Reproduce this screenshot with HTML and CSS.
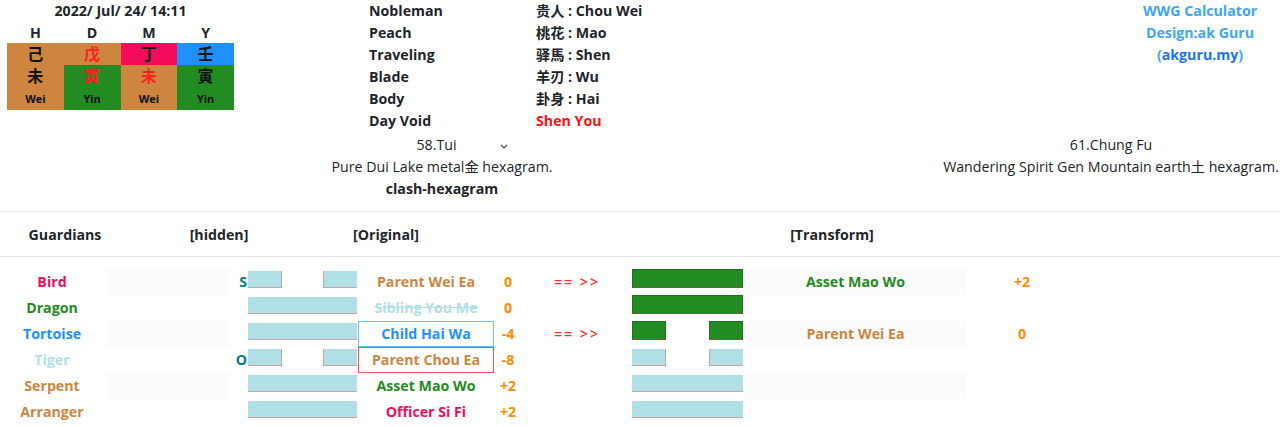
FILE: index.html
```html
<!DOCTYPE html>
<html lang="en">
<head>
<meta charset="utf-8">
<title>WWG Calculator</title>
<link rel="stylesheet" href="styles.css">
</head>
<body>
<div class="top">
  <div class="pillars">
    <div class="date">2022/ Jul/ 24/ 14:11</div>
    <div class="pgrid">
      <div class="ph">H</div><div class="ph">D</div><div class="ph">M</div><div class="ph">Y</div>
      <div class="stem peru">己</div>
      <div class="stem peru red">戊</div>
      <div class="stem pink">丁</div>
      <div class="stem blue">壬</div>
      <div class="branch peru"><span class="bc">未</span><span class="bn">Wei</span></div>
      <div class="branch green"><span class="bc red">寅</span><span class="bn">Yin</span></div>
      <div class="branch peru"><span class="bc red">未</span><span class="bn">Wei</span></div>
      <div class="branch green"><span class="bc">寅</span><span class="bn">Yin</span></div>
    </div>
  </div>
  <div class="info">
    <div>Nobleman</div><div>贵人 : Chou Wei</div>
    <div>Peach</div><div>桃花 : Mao</div>
    <div>Traveling</div><div>驿馬 : Shen</div>
    <div>Blade</div><div>羊刃 : Wu</div>
    <div>Body</div><div>卦身 : Hai</div>
    <div>Day Void</div><div class="void">Shen You</div>
  </div>
  <div class="brand">
    <div>WWG Calculator</div>
    <div>Design:ak Guru</div>
    <div>(<a href="#">akguru.my</a>)</div>
  </div>
</div>

<div class="hexnames">
  <div class="hx hx-left">
    <div class="select"><span>58.Tui</span><svg class="chev" width="8" height="5" viewBox="0 0 8 5"><polyline points="1,1 4,4 7,1" fill="none" stroke="#444" stroke-width="1.1"/></svg></div>
    <div>Pure Dui Lake metal金 hexagram.</div>
    <div class="bold">clash-hexagram</div>
  </div>
  <div class="hx hx-right">
    <div>61.Chung Fu</div>
    <div>Wandering Spirit Gen Mountain earth土 hexagram.</div>
  </div>
</div>

<div class="table">
  <div class="thead">
    <div>Guardians</div>
    <div>[hidden]</div>
    <div>[Original]</div>
    <div>[Transform]</div>
  </div>
  <div class="tbody">
    <div class="row odd">
      <div class="c-guard c-pink">Bird</div>
      <div class="c-hidden"></div>
      <div class="c-lbl">S</div>
      <div class="c-line"><div class="yin"><i></i><i></i></div></div>
      <div class="c-name c-peru">Parent Wei Ea</div>
      <div class="c-val">0</div>
      <div class="c-arrow">== &gt;&gt;</div>
      <div class="c-tline"><div class="yang g"></div></div>
      <div class="c-tname c-green">Asset Mao Wo</div>
      <div class="c-tval">+2</div>
    </div>
    <div class="row">
      <div class="c-guard c-green">Dragon</div>
      <div class="c-hidden"></div>
      <div class="c-lbl"></div>
      <div class="c-line"><div class="yang"></div></div>
      <div class="c-name c-powder strike">Sibling You Me</div>
      <div class="c-val">0</div>
      <div class="c-arrow"></div>
      <div class="c-tline"><div class="yang g"></div></div>
      <div class="c-tname"></div>
      <div class="c-tval"></div>
    </div>
    <div class="row odd">
      <div class="c-guard c-blue">Tortoise</div>
      <div class="c-hidden"></div>
      <div class="c-lbl"></div>
      <div class="c-line"><div class="yang"></div></div>
      <div class="c-name c-blue box-blue">Child Hai Wa</div>
      <div class="c-val">-4</div>
      <div class="c-arrow">== &gt;&gt;</div>
      <div class="c-tline"><div class="yin g"><i></i><i></i></div></div>
      <div class="c-tname c-peru">Parent Wei Ea</div>
      <div class="c-tval">0</div>
    </div>
    <div class="row">
      <div class="c-guard c-powder">Tiger</div>
      <div class="c-hidden"></div>
      <div class="c-lbl">O</div>
      <div class="c-line"><div class="yin"><i></i><i></i></div></div>
      <div class="c-name c-peru box-red">Parent Chou Ea</div>
      <div class="c-val">-8</div>
      <div class="c-arrow"></div>
      <div class="c-tline"><div class="yin"><i></i><i></i></div></div>
      <div class="c-tname"></div>
      <div class="c-tval"></div>
    </div>
    <div class="row odd">
      <div class="c-guard c-peru">Serpent</div>
      <div class="c-hidden"></div>
      <div class="c-lbl"></div>
      <div class="c-line"><div class="yang"></div></div>
      <div class="c-name c-green">Asset Mao Wo</div>
      <div class="c-val">+2</div>
      <div class="c-arrow"></div>
      <div class="c-tline"><div class="yang"></div></div>
      <div class="c-tname"></div>
      <div class="c-tval"></div>
    </div>
    <div class="row">
      <div class="c-guard c-peru">Arranger</div>
      <div class="c-hidden"></div>
      <div class="c-lbl"></div>
      <div class="c-line"><div class="yang"></div></div>
      <div class="c-name c-pink">Officer Si Fi</div>
      <div class="c-val">+2</div>
      <div class="c-arrow"></div>
      <div class="c-tline"><div class="yang"></div></div>
      <div class="c-tname"></div>
      <div class="c-tval"></div>
    </div>
  </div>
</div>
</body>
</html>
```

FILE: styles.css
```css
* { box-sizing: border-box; }
body {
  margin: 0;
  font-family: "Open Sans", "Noto Sans CJK SC", sans-serif;
  font-size: 14.2px;
  line-height: 22px;
  color: #212529;
  background: #fff;
  overflow: hidden;
}
.bold { font-weight: 700; }

/* top area */
.top {
  display: grid;
  grid-template-columns: 369px 1fr 160px;
  height: 132px;
}
.pillars { padding-left: 7px; }
.date {
  width: 227px;
  text-align: center;
  font-weight: 700;
}
.pgrid {
  display: grid;
  grid-template-columns: repeat(4, 1fr);
  width: 227px;
}
.ph {
  text-align: center;
  font-weight: 700;
  height: 21px;
  line-height: 21px;
}
.stem {
  height: 22px;
  line-height: 22px;
  text-align: center;
  font-weight: 700;
  font-size: 16px;
  color: #111;
}
.branch {
  height: 45px;
  display: flex;
  flex-direction: column;
  align-items: center;
  color: #111;
}
.bc { font-size: 16px; font-weight: 700; line-height: 23px; }
.bn { font-size: 11px; font-weight: 700; line-height: 22px; }
.peru { background: #cd853f; }
.green { background: #228b22; }
.pink { background: #f60a5b; }
.blue { background: #1e90ff; }
.red { color: #ff1f1f; }

.info {
  display: grid;
  grid-template-columns: 167px auto;
  grid-auto-rows: 22px;
  align-content: start;
  font-weight: 700;
}
.void { color: #ff1010; }

.brand {
  text-align: center;
  font-weight: 700;
  color: #3ea6f5;
}
.brand a { color: #1a73f2; text-decoration: none; }

/* hexagram names */
.hexnames {
  display: grid;
  grid-template-columns: 242px 400px 1fr 338px;
  margin-top: 2px;
}
.hx { text-align: center; white-space: nowrap; }
.hx-left { grid-column: 2; }
.hx-right { grid-column: 4; }
.select {
  display: flex;
  justify-content: center;
  align-items: center;
  padding-left: 40px;
}
.chev { margin-left: 43px; margin-top: 2px; }

/* table */
.table { margin-top: 11px; }
.thead {
  display: grid;
  grid-template-columns: 130px 178px 156px 736px;
  border-top: 1px solid #e3e5e8;
  border-bottom: 1px solid #e3e5e8;
  padding: 12px 0 10px;
  font-weight: 700;
  text-align: center;
}
.tbody { padding-top: 12px; }
.row {
  display: flex;
  height: 26px;
  font-weight: 700;
  line-height: 26px;
}
.row > div { flex: none; }
.c-guard { width: 104px; text-align: center; }
.c-hidden { width: 121px; margin-left: 4px; }
.c-lbl { width: 19px; text-align: right; padding-right: 1px; color: #008080; }
.c-line { width: 109px; padding-top: 2px; }
.c-name { width: 136px; margin-left: 1px; text-align: center; }
.c-val { width: 28px; text-align: center; color: #ff8c00; }
.c-arrow { width: 110px; text-align: center; color: #ff3030; letter-spacing: 2px; font-weight: 600; }
.c-tline { width: 111px; padding-top: 0; }
.c-tname { width: 221px; margin-left: 2px; text-align: center; }
.c-tval { width: 112px; text-align: center; color: #ff8c00; }

.row.odd .c-hidden,
.row.odd .c-tname { background: #fbfbfb; }

.box-blue { border: 1px solid #6cbcff; line-height: 24px; }
.box-red { border: 1px solid #f55252; line-height: 24px; }

.c-pink { color: #f50a5a; }
.c-green { color: #228b22; }
.c-blue { color: #1e90ff; }
.c-powder { color: #b0e0e6; }
.c-peru { color: #cd853f; }
.strike { text-decoration: line-through; }

/* lines */
.yang {
  height: 17px;
  background: #b0e0e6;
  border-bottom: 1px solid #c9a3ab;
}
.yin {
  height: 17px;
  display: flex;
  justify-content: space-between;
}
.yin i {
  display: block;
  width: 31%;
  height: 17px;
  background: #b0e0e6;
  border-bottom: 1px solid #c9a3ab;
}
.yin i:first-child { border-right: 1px solid #c9a3ab; }
.yin i:last-child { border-left: 1px solid #c9a3ab; }
.c-tline .yang, .c-tline .yin, .c-tline .yin i { height: 19px; }
.c-tline .yin:not(.g) { margin-top: 2px; height: 17px; }
.c-tline .yin:not(.g) i { height: 17px; }
.c-tline .yang:not(.g) { margin-top: 2px; height: 17px; }
.yang.g, .yin.g i {
  background: #228b22;
  border: 1px solid #1c721c;
  border-bottom-color: #7d5a3c;
}
```
